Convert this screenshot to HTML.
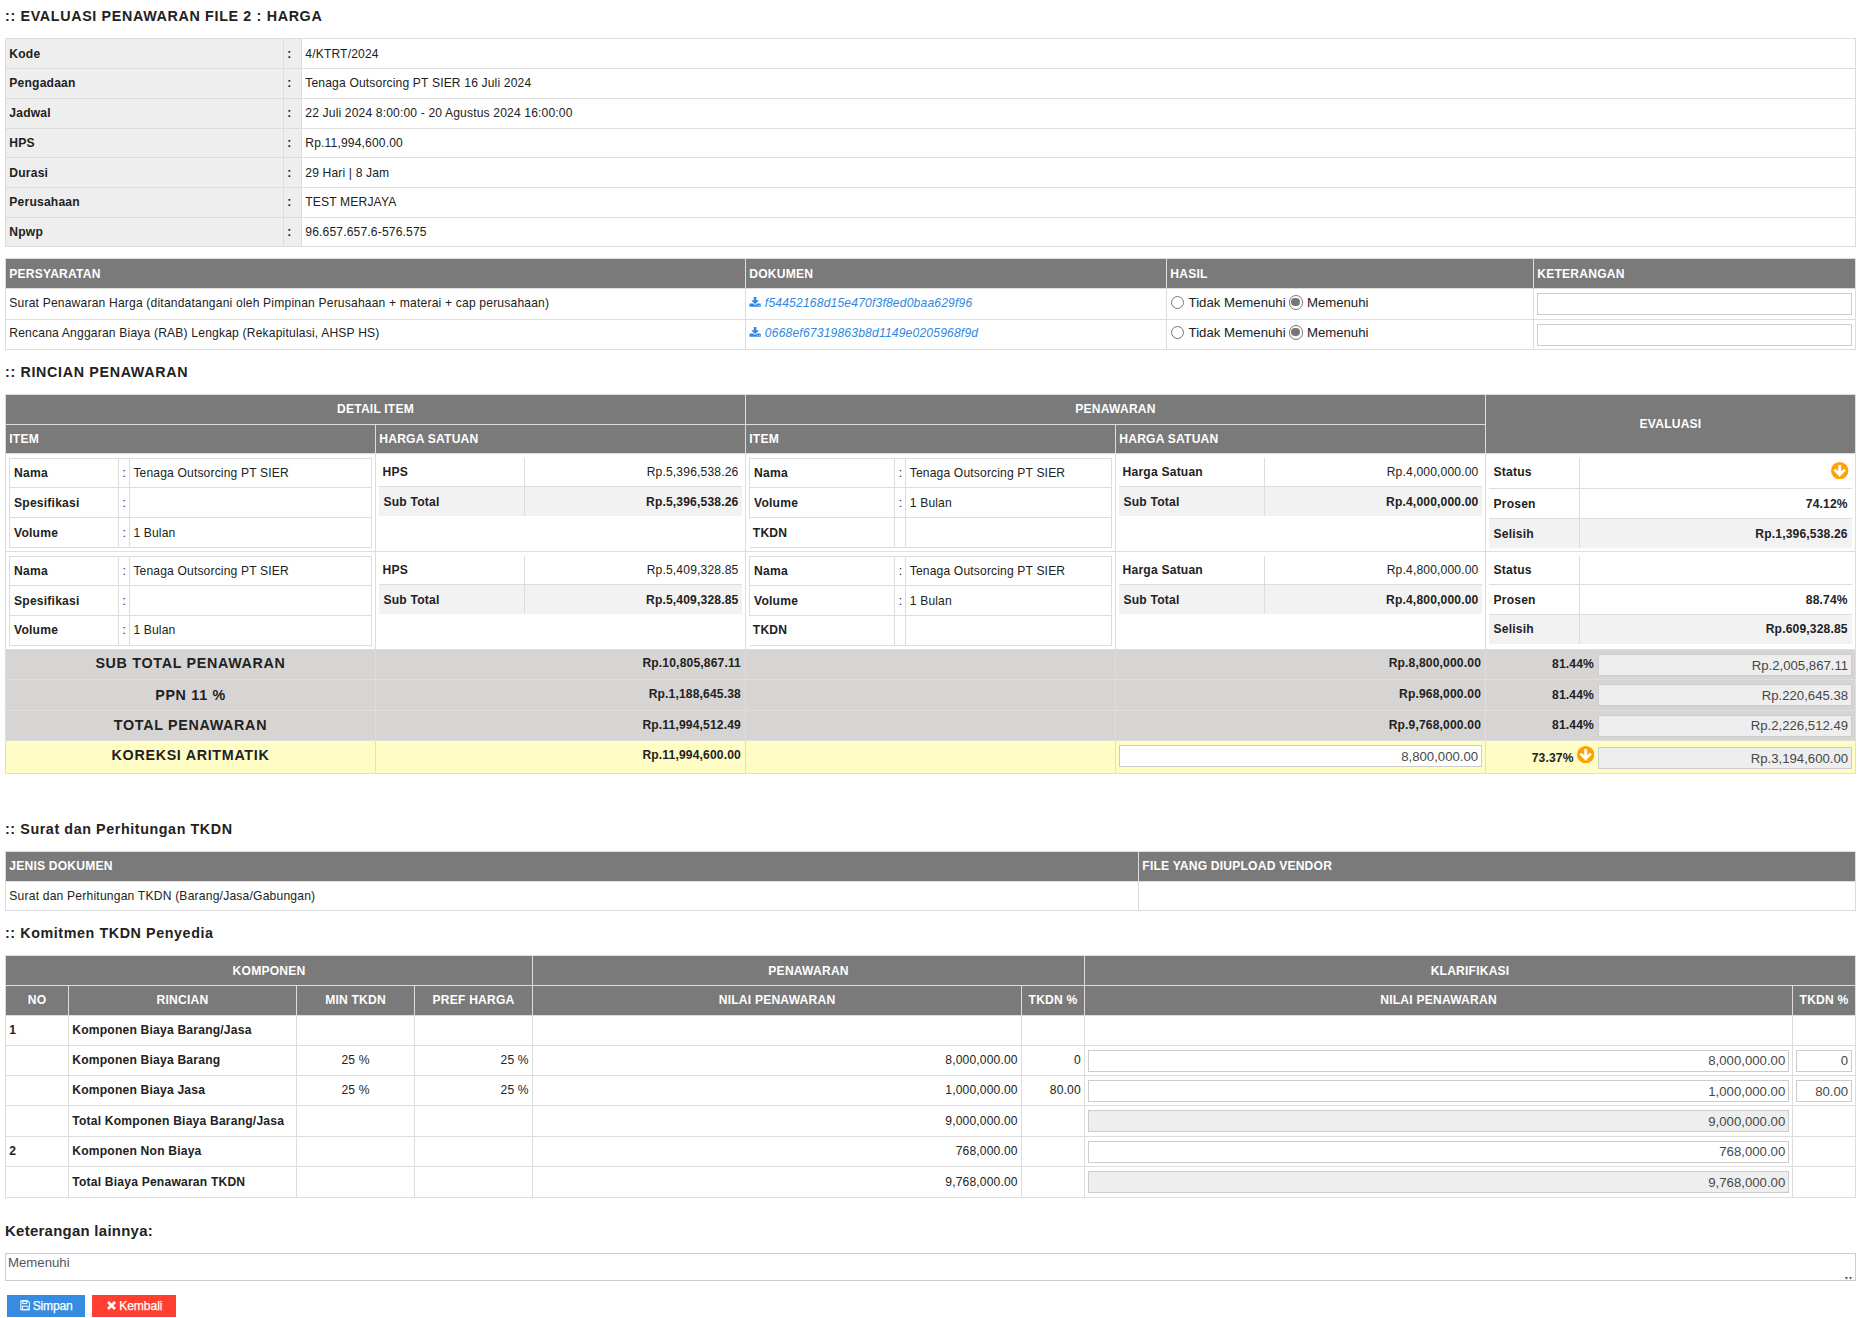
<!DOCTYPE html><html><head><meta charset="utf-8"><title>Evaluasi Penawaran File 2 : Harga</title><style>
*{box-sizing:border-box}
html,body{margin:0;padding:0;background:#fff}
body{width:1862px;height:1318px;position:relative;overflow:hidden;font-family:"Liberation Sans",sans-serif;font-size:12.100px;color:#222;line-height:14px;letter-spacing:.15px}
.abs{position:absolute;left:5px;width:1851px}
.h{position:absolute;left:5px;font-weight:bold;font-size:14.300px;line-height:16px;color:#222;white-space:nowrap;letter-spacing:.66px}
table{border-collapse:collapse;border-spacing:0;table-layout:fixed;width:100%}
tr.u{--pb:2px}
tr.d{--pt:2px}
td,th{border:1px solid #ddd;padding:var(--pt,0px) 3.300px var(--pb,0px) 3.300px;vertical-align:middle;text-align:left;font-weight:normal;overflow:hidden;white-space:nowrap}
th{font-weight:bold;letter-spacing:.2px}
.hd th{background:#7a7a7a;color:#fff}
.c{text-align:center}
.r{text-align:right}
.b{font-weight:bold}
.lb{background:#eee;font-weight:bold;letter-spacing:.2px}
a{color:#3088e2;font-style:italic;text-decoration:none;letter-spacing:.18px}
.rad{display:inline-block;width:13.600px;height:13.600px;border:1.150px solid #767676;border-radius:50%;vertical-align:-2.300px;margin:0 4.200px 0 0;position:relative;background:#fff}
.rad.on{border-width:1.300px;width:14.400px;height:14.400px;margin:0 3.800px 0 -.4px;vertical-align:-2.800px}
.rad.on:after{content:"";position:absolute;left:1.700px;top:1.700px;width:8.400px;height:8.400px;border-radius:50%;background:#777}
.rl{font-size:13.200px;letter-spacing:0}
.inp{display:block;font-weight:normal;letter-spacing:0;border:1px solid #ccc;background:#fff;height:22px;line-height:21.400px;font-size:13.200px;color:#484848;text-align:right;padding:0 2.800px 0 3px;white-space:nowrap;overflow:hidden}
.inp.ro{background:#eee}
.inp.up{line-height:19.400px}
.ic td{padding:1px 3px 0 3px}
/* nested tables */
.nt{width:100%}
.nb td,.nb th{border:0}
.ev td,.ev th{padding-left:4.200px;padding-right:4px}
.nb tr.r1 td,.nb tr.r1 th{border-bottom:1px solid #ddd}
.nb th{border-right:1px solid #ddd !important}
.nb tr.g td,.nb tr.g th{background:#f2f2f2}
td.cell{padding:4.400px 3.300px 0 3.300px;vertical-align:top}
.tot td{background:#d7d5d4;border-color:#dfdedd;font-weight:bold}
.tot td.big{font-size:14.300px;text-align:center;letter-spacing:.69px}
.tot td.v{text-align:right;padding-right:4px}
.tot td.e{padding:4px 3px 0 0;vertical-align:top}
td.ci{padding:4px 3px 0 3px;vertical-align:top}
.fx{display:flex;align-items:flex-start;justify-content:flex-end}
.yel td{background:#fffcc6}
.btn{position:absolute;top:1295px;height:22px;line-height:22px;color:#fff;font-size:12.100px;display:flex;align-items:center;justify-content:center;letter-spacing:-.24px;white-space:nowrap}
.btn svg{margin-right:2.600px;flex:none;position:relative;top:-.4px}
.btn span{position:relative;top:-.5px;-webkit-text-stroke:.25px #fff}
</style></head><body>
<div class="h" style="top:8px">:: EVALUASI PENAWARAN FILE 2 : HARGA</div>
<div class="abs" style="top:38px"><table><colgroup><col style="width:278px"><col style="width:18px"><col></colgroup>
<tr style="height:30px"><td class="lb">Kode</td><td class="lb">:</td><td>4/KTRT/2024</td></tr>
<tr class="u" style="height:30px"><td class="lb">Pengadaan</td><td class="lb">:</td><td>Tenaga Outsorcing PT SIER 16 Juli 2024</td></tr>
<tr class="u" style="height:30px"><td class="lb">Jadwal</td><td class="lb">:</td><td>22 Juli 2024 8:00:00 - 20 Agustus 2024 16:00:00</td></tr>
<tr style="height:29px"><td class="lb">HPS</td><td class="lb">:</td><td>Rp.11,994,600.00</td></tr>
<tr style="height:30px"><td class="lb">Durasi</td><td class="lb">:</td><td>29 Hari | 8 Jam</td></tr>
<tr class="u" style="height:30px"><td class="lb">Perusahaan</td><td class="lb">:</td><td>TEST MERJAYA</td></tr>
<tr style="height:29px"><td class="lb">Npwp</td><td class="lb">:</td><td>96.657.657.6-576.575</td></tr>
</table></div>
<div class="abs" style="top:258px"><table><colgroup><col style="width:740px"><col style="width:421px"><col style="width:367px"><col></colgroup>
<tr class="hd" style="height:30px"><th>PERSYARATAN</th><th>DOKUMEN</th><th>HASIL</th><th>KETERANGAN</th></tr>
<tr style="height:31px"><td style="letter-spacing:.18px;padding-bottom:2px">Surat Penawaran Harga (ditandatangani oleh Pimpinan Perusahaan + materai + cap perusahaan)</td><td style="padding-bottom:2px"><a><svg width="12.200" height="11.5" preserveAspectRatio="none" viewBox="0 0 1792 1792" style="vertical-align:-1.400px;margin-right:-.2px"><path fill="currentColor" d="M1344 1344q0-26-19-45t-45-19-45 19-19 45 19 45 45 19 45-19 19-45zm256 0q0-26-19-45t-45-19-45 19-19 45 19 45 45 19 45-19 19-45zm128-224v320q0 40-28 68t-68 28h-1472q-40 0-68-28t-28-68v-320q0-40 28-68t68-28h465l135 136q58 56 136 56t136-56l136-136h464q40 0 68 28t28 68zm-325-569q17 41-14 70l-448 448q-18 19-45 19t-45-19l-448-448q-31-29-14-70 17-39 59-39h256v-448q0-26 19-45t45-19h256q26 0 45 19t19 45v448h256q42 0 59 39z"/></svg> <span>f54452168d15e470f3f8ed0baa629f96</span></a></td><td style="padding:0 3px 3px 3.800px"><span class="rad"></span><span class="rl">Tidak Memenuhi</span> <span class="rad on"></span><span class="rl">Memenuhi</span></td><td class="ci"><span class="inp"></span></td></tr>
<tr style="height:30px"><td style="letter-spacing:.18px;padding-bottom:3px">Rencana Anggaran Biaya (RAB) Lengkap (Rekapitulasi, AHSP HS)</td><td style="padding-bottom:3px"><a><svg width="12.200" height="11.5" preserveAspectRatio="none" viewBox="0 0 1792 1792" style="vertical-align:-1.400px;margin-right:-.2px"><path fill="currentColor" d="M1344 1344q0-26-19-45t-45-19-45 19-19 45 19 45 45 19 45-19 19-45zm256 0q0-26-19-45t-45-19-45 19-19 45 19 45 45 19 45-19 19-45zm128-224v320q0 40-28 68t-68 28h-1472q-40 0-68-28t-28-68v-320q0-40 28-68t68-28h465l135 136q58 56 136 56t136-56l136-136h464q40 0 68 28t28 68zm-325-569q17 41-14 70l-448 448q-18 19-45 19t-45-19l-448-448q-31-29-14-70 17-39 59-39h256v-448q0-26 19-45t45-19h256q26 0 45 19t19 45v448h256q42 0 59 39z"/></svg> <span>0668ef67319863b8d1149e0205968f9d</span></a></td><td style="padding:0 3px 4px 3.800px"><span class="rad"></span><span class="rl">Tidak Memenuhi</span> <span class="rad on"></span><span class="rl">Memenuhi</span></td><td class="ci"><span class="inp"></span></td></tr>
</table></div>
<div class="h" style="top:364px">:: RINCIAN PENAWARAN</div>
<div class="abs" style="top:394px"><table><colgroup><col style="width:370px"><col style="width:370px"><col style="width:370px"><col style="width:370px"><col></colgroup>
<tr class="hd u" style="height:30px"><th colspan="2" class="c">DETAIL ITEM</th><th colspan="2" class="c">PENAWARAN</th><th rowspan="2" class="c" style="padding-bottom:0">EVALUASI</th></tr>
<tr class="hd" style="height:29px"><th>ITEM</th><th>HARGA SATUAN</th><th>ITEM</th><th>HARGA SATUAN</th></tr>
<tr style="height:98px">
<td class="cell"><table class="nt"><colgroup><col style="width:108.8px"><col style="width:11px"><col></colgroup><tr style="height:29px"><th style="padding-left:3.800px">Nama</th><td>:</td><td>Tenaga Outsorcing PT SIER</td></tr><tr style="height:30px"><th style="padding-left:3.800px">Spesifikasi</th><td>:</td><td></td></tr><tr style="height:30px"><th style="padding-left:3.800px">Volume</th><td>:</td><td>1 Bulan</td></tr></table></td>
<td class="cell"><table class="nt nb"><colgroup><col style="width:40%"><col></colgroup><tr class="r1" style="height:28.600px"><th>HPS</th><td class="r">Rp.5,396,538.26</td></tr><tr class="g" style="height:28.900px"><th style="padding-left:4.200px">Sub Total</th><td class="r b">Rp.5,396,538.26</td></tr></table></td>
<td class="cell"><table class="nt"><colgroup><col style="width:145.2px"><col style="width:11px"><col></colgroup><tr style="height:29px"><th style="padding-left:3.800px">Nama</th><td>:</td><td>Tenaga Outsorcing PT SIER</td></tr><tr style="height:30px"><th style="padding-left:3.800px">Volume</th><td>:</td><td>1 Bulan</td></tr><tr style="height:30px"><th style="border-left:0;padding-left:3px">TKDN</th><td></td><td></td></tr></table></td>
<td class="cell"><table class="nt nb"><colgroup><col style="width:40%"><col></colgroup><tr class="r1" style="height:28.600px"><th>Harga Satuan</th><td class="r">Rp.4,000,000.00</td></tr><tr class="g" style="height:28.900px"><th style="padding-left:4.200px">Sub Total</th><td class="r b">Rp.4,000,000.00</td></tr></table></td>
<td class="cell"><table class="nt nb ev"><colgroup><col style="width:25%"><col></colgroup><tr class="r1 u" style="height:30.500px"><th>Status</th><td class="r"><svg width="17.4" height="17.4" viewBox="0 0 100 100" style="vertical-align:middle;position:relative;top:-1.800px;left:.8px"><circle cx="50" cy="50" r="50" fill="#ffa100"/><path fill="#fff" stroke="#fff" stroke-width="3" stroke-linejoin="round" d="M43 18.500H57V55L75.500 40L84 48.500L50 84L16 48.500L24.500 40L43 55Z"/></svg></td></tr><tr class="r1" style="height:29.900px"><th>Prosen</th><td class="r b">74.12%</td></tr><tr class="g " style="height:29.500px"><th>Selisih</th><td class="r b">Rp.1,396,538.26</td></tr></table></td>
</tr>
<tr style="height:98px">
<td class="cell"><table class="nt"><colgroup><col style="width:108.8px"><col style="width:11px"><col></colgroup><tr style="height:29px"><th style="padding-left:3.800px">Nama</th><td>:</td><td>Tenaga Outsorcing PT SIER</td></tr><tr style="height:30px"><th style="padding-left:3.800px">Spesifikasi</th><td>:</td><td></td></tr><tr class="u" style="height:30px"><th style="padding-left:3.800px">Volume</th><td>:</td><td>1 Bulan</td></tr></table></td>
<td class="cell"><table class="nt nb"><colgroup><col style="width:40%"><col></colgroup><tr class="r1" style="height:28.600px"><th>HPS</th><td class="r">Rp.5,409,328.85</td></tr><tr class="g" style="height:28.900px"><th style="padding-left:4.200px">Sub Total</th><td class="r b">Rp.5,409,328.85</td></tr></table></td>
<td class="cell"><table class="nt"><colgroup><col style="width:145.2px"><col style="width:11px"><col></colgroup><tr style="height:29px"><th style="padding-left:3.800px">Nama</th><td>:</td><td>Tenaga Outsorcing PT SIER</td></tr><tr style="height:30px"><th style="padding-left:3.800px">Volume</th><td>:</td><td>1 Bulan</td></tr><tr class="u" style="height:30px"><th style="border-left:0;padding-left:3px">TKDN</th><td></td><td></td></tr></table></td>
<td class="cell"><table class="nt nb"><colgroup><col style="width:40%"><col></colgroup><tr class="r1" style="height:28.600px"><th>Harga Satuan</th><td class="r">Rp.4,800,000.00</td></tr><tr class="g" style="height:28.900px"><th style="padding-left:4.200px">Sub Total</th><td class="r b">Rp.4,800,000.00</td></tr></table></td>
<td class="cell"><table class="nt nb ev"><colgroup><col style="width:25%"><col></colgroup><tr class="r1 " style="height:28.600px"><th>Status</th><td class="r"></td></tr><tr class="r1" style="height:29.900px"><th>Prosen</th><td class="r b">88.74%</td></tr><tr class="g u" style="height:29.500px"><th>Selisih</th><td class="r b">Rp.609,328.85</td></tr></table></td>
</tr>
<tr class="tot" style="height:30px"><td class="big" style="padding-bottom:4px">SUB TOTAL PENAWARAN</td><td class="v" style="padding-bottom:3px">Rp.10,805,867.11</td><td></td><td class="v" style="padding-bottom:3px">Rp.8,800,000.00</td><td class="e"><div class="fx"><span style="margin:3px 4px 0 0">81.44%</span><span class="inp ro" style="width:254px">Rp.2,005,867.11</span></div></td></tr>
<tr class="tot" style="height:31px"><td class="big" style="padding-bottom:1px">PPN 11 %</td><td class="v" style="padding-bottom:3px">Rp.1,188,645.38</td><td></td><td class="v" style="padding-bottom:3px">Rp.968,000.00</td><td class="e"><div class="fx"><span style="margin:3.5px 4px 0 0">81.44%</span><span class="inp ro" style="width:254px">Rp.220,645.38</span></div></td></tr>
<tr class="tot" style="height:30px"><td class="big" style="padding-bottom:2px">TOTAL PENAWARAN</td><td class="v" style="padding-bottom:2px">Rp.11,994,512.49</td><td></td><td class="v" style="padding-bottom:2px">Rp.9,768,000.00</td><td class="e"><div class="fx"><span style="margin:3px 4px 0 0">81.44%</span><span class="inp ro up" style="width:254px">Rp.2,226,512.49</span></div></td></tr>
<tr class="tot yel" style="height:33px"><td class="big" style="padding-bottom:4px">KOREKSI ARITMATIK</td><td class="v" style="padding-bottom:4px">Rp.11,994,600.00</td><td></td><td class="ci"><span class="inp">8,800,000.00</span></td><td class="e"><div class="fx"><span style="margin:6px 3px 0 0">73.37%</span><svg width="17.4" height="17.4" viewBox="0 0 100 100" style="margin-top:1px"><circle cx="50" cy="50" r="50" fill="#ffa100"/><path fill="#fff" stroke="#fff" stroke-width="3" stroke-linejoin="round" d="M43 18.500H57V55L75.500 40L84 48.500L50 84L16 48.500L24.500 40L43 55Z"/></svg><span class="inp ro" style="width:254px;margin:2px 0 0 4px">Rp.3,194,600.00</span></div></td></tr>
</table></div>
<div class="h" style="top:821px;letter-spacing:.59px">:: Surat dan Perhitungan TKDN</div>
<div class="abs" style="top:851px"><table><colgroup><col style="width:1133px"><col></colgroup>
<tr class="hd u" style="height:30px"><th>JENIS DOKUMEN</th><th>FILE YANG DIUPLOAD VENDOR</th></tr>
<tr style="height:29px"><td style="letter-spacing:.2px">Surat dan Perhitungan TKDN (Barang/Jasa/Gabungan)</td><td></td></tr>
</table></div>
<div class="h" style="top:925px;letter-spacing:.59px">:: Komitmen TKDN Penyedia</div>
<div class="abs" style="top:955px"><table><colgroup><col style="width:63px"><col style="width:228px"><col style="width:118px"><col style="width:118px"><col style="width:489px"><col style="width:63px"><col style="width:708px"><col></colgroup>
<tr class="hd" style="height:30px"><th colspan="4" class="c">KOMPONEN</th><th colspan="2" class="c">PENAWARAN</th><th colspan="2" class="c">KLARIFIKASI</th></tr>
<tr class="hd u" style="height:30px"><th class="c">NO</th><th class="c">RINCIAN</th><th class="c">MIN TKDN</th><th class="c">PREF HARGA</th><th class="c">NILAI PENAWARAN</th><th class="c">TKDN %</th><th class="c">NILAI PENAWARAN</th><th class="c">TKDN %</th></tr>
<tr class="u" style="height:30px"><th>1</th><th>Komponen Biaya Barang/Jasa</th><td class="c"></td><td class="r"></td><td class="r"></td><td class="r"></td><td class="ci"></td><td class="ci"></td></tr>
<tr class="u" style="height:30px"><th></th><th>Komponen Biaya Barang</th><td class="c">25 %</td><td class="r">25 %</td><td class="r">8,000,000.00</td><td class="r">0</td><td class="ci"><span class="inp up">8,000,000.00</span></td><td class="ci"><span class="inp up">0</span></td></tr>
<tr class="u" style="height:30px"><th></th><th>Komponen Biaya Jasa</th><td class="c">25 %</td><td class="r">25 %</td><td class="r">1,000,000.00</td><td class="r">80.00</td><td class="ci"><span class="inp">1,000,000.00</span></td><td class="ci"><span class="inp">80.00</span></td></tr>
<tr style="height:31px"><th></th><th>Total Komponen Biaya Barang/Jasa</th><td class="c"></td><td class="r"></td><td class="r">9,000,000.00</td><td class="r"></td><td class="ci"><span class="inp ro">9,000,000.00</span></td><td class="ci"></td></tr>
<tr class="u" style="height:30px"><th>2</th><th>Komponen Non Biaya</th><td class="c"></td><td class="r"></td><td class="r">768,000.00</td><td class="r"></td><td class="ci"><span class="inp up">768,000.00</span></td><td class="ci"></td></tr>
<tr style="height:31px"><th></th><th>Total Biaya Penawaran TKDN</th><td class="c"></td><td class="r"></td><td class="r">9,768,000.00</td><td class="r"></td><td class="ci"><span class="inp ro">9,768,000.00</span></td><td class="ci"></td></tr>
</table></div>
<div class="h" style="top:1223px;font-size:14.900px;letter-spacing:.3px">Keterangan lainnya:</div>
<div class="abs" style="top:1253px;height:28px;border:1px solid #ccc;color:#555;font-size:13.200px;padding:.5px 2px;letter-spacing:0;line-height:15px">Memenuhi<svg width="8" height="3" viewBox="0 0 8 3" style="position:absolute;right:2.200px;bottom:0"><path d="M0 0h2.800L2 2.300h-1zM4.300 0h2.600L6 2.300h-.8z" fill="#555"/></svg></div>
<div class="btn" style="left:7px;width:78px;background:#358ce0"><svg width="10.6" height="10.6" viewBox="0 0 100 100"><path fill="none" stroke="#fff" stroke-width="10" stroke-linejoin="round" d="M8 8h64l20 20v64h-84z"/><rect x="26" y="8" width="38" height="26" fill="none" stroke="#fff" stroke-width="9"/><rect x="24" y="58" width="52" height="34" fill="none" stroke="#fff" stroke-width="9"/></svg><span>Simpan</span></div>
<div class="btn" style="left:92px;width:84px;background:#ff4030;letter-spacing:-.05px;padding-left:1px"><svg width="9" height="9" viewBox="0 0 100 100"><path stroke="#fff" stroke-width="30" stroke-linecap="butt" d="M11 11L89 89M89 11L11 89"/></svg><span style="margin-left:1px">Kembali</span></div>
</body></html>
